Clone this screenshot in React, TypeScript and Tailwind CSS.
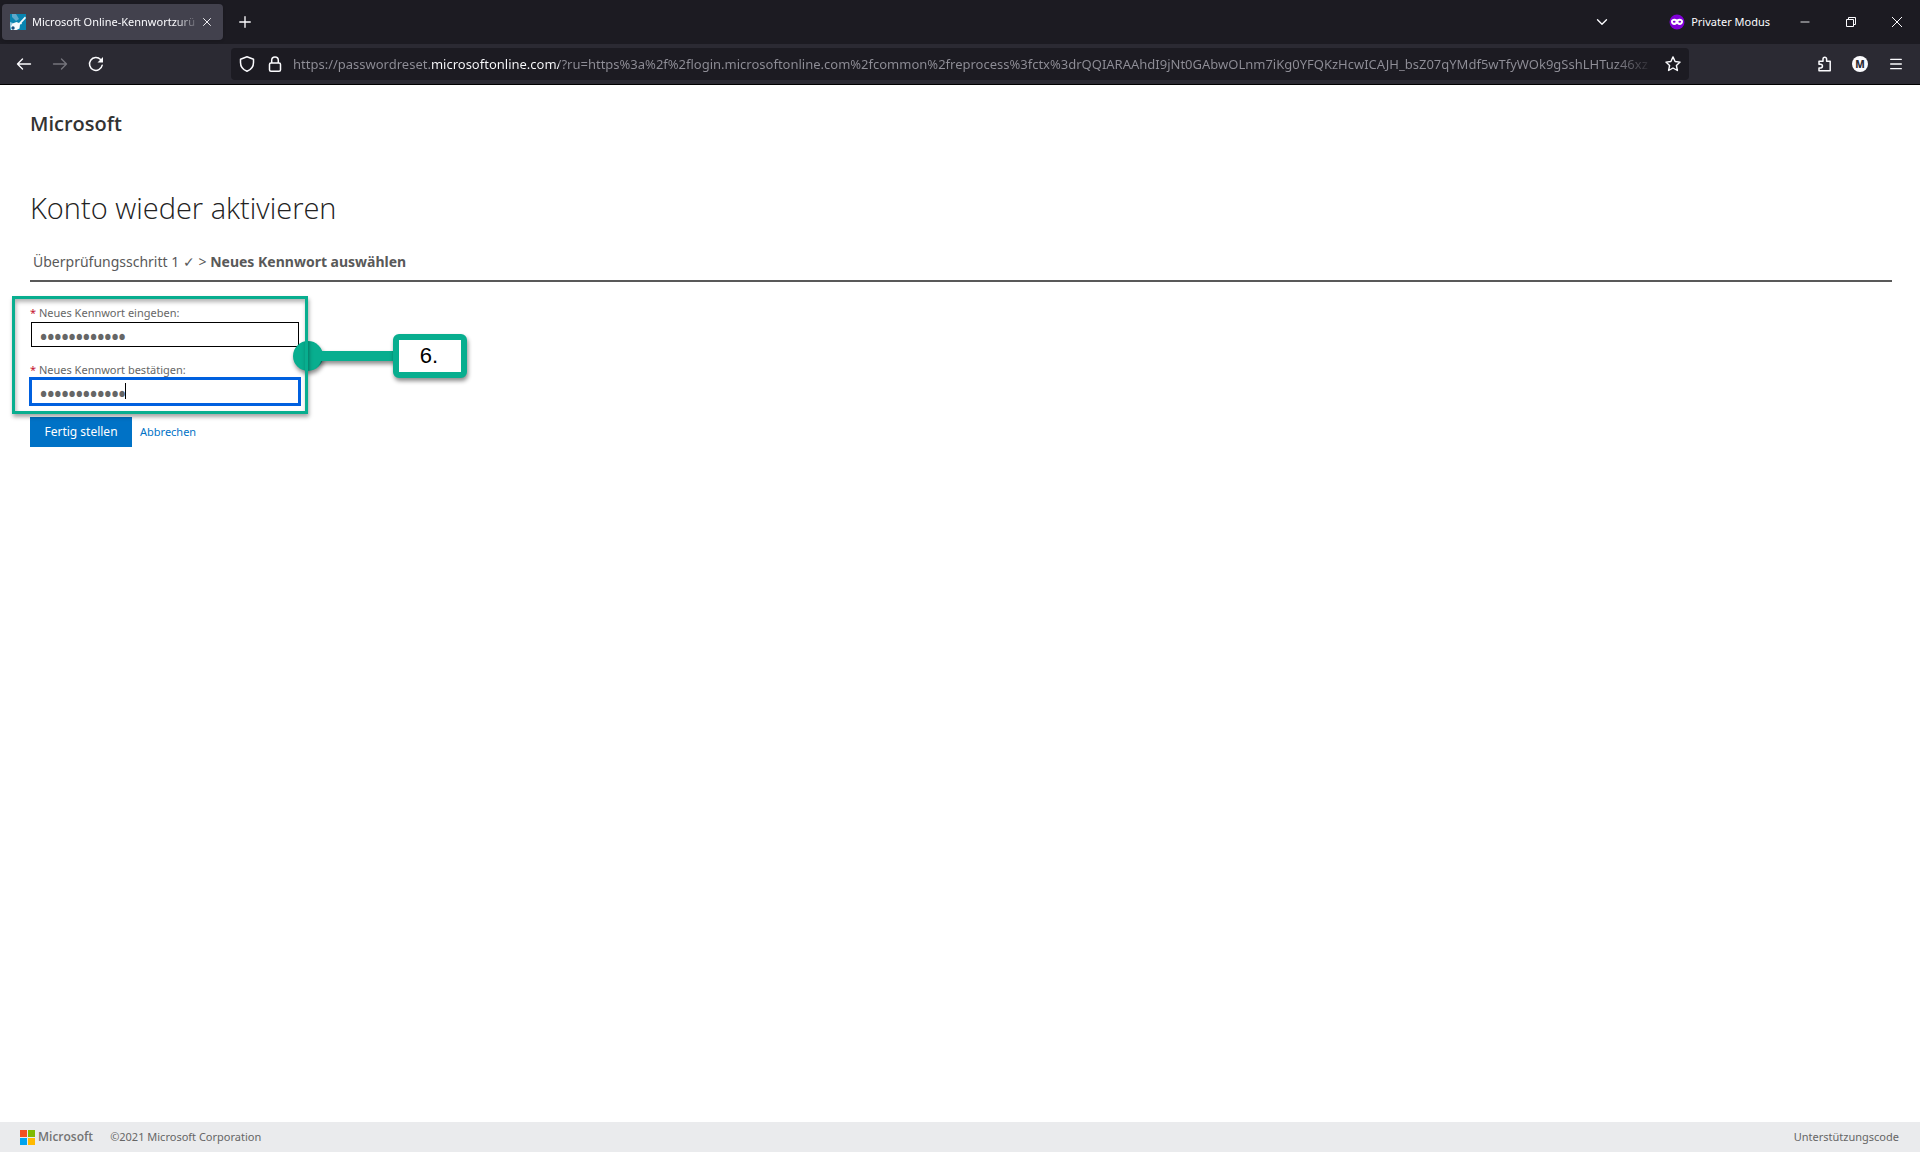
import React from "react";
import { Menu, Minus, Plus, X, ChevronDown } from "lucide-react";

const PAGE_ADDRESS = [
  "https://passwordreset.microsoftonline.com/",
  "?ru=https%3a%2f%2flogin.microsoftonline.com%2fcommon%2freprocess%3fctx%3d",
  "rQQIARAAhdI9jNt0GAbwOLnm7iKg0YFQKzHcwICAJH_bsZ07qYMdf5wTfyWOk9gSshLHTuz46xz",
]
  .join("")
  .replace(/CAJH_.*$/, "CAJH_bsZ07qYMdf5wTfyWOk9gSshLHTuz46xz");

function KeyFavicon() {
  return (
    <svg viewBox="0 0 16 16" className="size-4 shrink-0" aria-hidden="true">
      <rect width="16" height="16" fill="#0884b0" />
      <path d="M2 0h4l3 5-3 2-4-4z" fill="#5fa9cb" />
      <path d="M0 8l3 1-1 3-2 1z" fill="#8cc6dd" />
      <path d="M15 2.500l1 1.500-4.500 5 .5 1-2 .5-.5 4-3 1.500H1l-.5-3 2-3.500 4-1.500 2.500 1z" fill="#f4fafc" />
      <circle cx="3" cy="14" r="1.700" fill="#16507e" />
    </svg>
  );
}

function TabBar() {
  return (
    <div className="flex h-11 items-center bg-[#1c1b22] pr-4 text-[11px] text-[#fbfbfe]">
      <div className="ml-0.5 flex h-9 w-[221px] items-center rounded bg-[#42414d] pr-2 pl-2 shadow">
        <KeyFavicon />
        <span className="ml-1.5 min-w-0 flex-1 overflow-hidden pt-px whitespace-nowrap [mask-image:linear-gradient(to_right,black_85%,transparent)]">
          Microsoft Online-Kennwortzurü
        </span>
        <button aria-label="Tab schließen" className="mr-px">
          <X size={14} strokeWidth={1.6} />
        </button>
      </div>
      <button aria-label="Neuer Tab" className="ml-[13px]">
        <Plus size={18} strokeWidth={1.8} />
      </button>
      <button aria-label="Alle Tabs auflisten" className="ml-auto">
        <ChevronDown size={18} strokeWidth={1.8} />
      </button>
      <div className="ml-[58px] flex items-center gap-1.5">
        <svg viewBox="0 0 16 16" className="size-4" aria-hidden="true">
          <circle cx="8" cy="8" r="7.500" fill="#8000d7" />
          <path
            d="M8 5.600C6.300 4.300 2 4.400 2 7.600s3.600 4.600 6 2.200c2.400 2.400 6 1 6-2.200S9.700 4.300 8 5.600z"
            fill="#fff"
          />
          <ellipse cx="5.200" cy="7.800" rx="1.400" ry="1" fill="#8000d7" />
          <ellipse cx="10.800" cy="7.800" rx="1.400" ry="1" fill="#8000d7" />
        </svg>
        <span className="pt-px">Privater Modus</span>
      </div>
      <button aria-label="Minimieren" className="ml-7">
        <Minus size={14} strokeWidth={1.5} />
      </button>
      <button aria-label="Verkleinern" className="ml-8">
        <svg viewBox="0 0 14 14" className="size-3.5" fill="none" stroke="currentColor" aria-hidden="true">
          <path d="M2.500 4.500h7v7h-7zM4.500 4.500v-2h7v7h-2" />
        </svg>
      </button>
      <button aria-label="Schließen" className="ml-8">
        <svg viewBox="0 0 14 14" className="size-3.5" fill="none" stroke="currentColor" aria-hidden="true">
          <path d="M2 2l10 10M12 2l-10 10" />
        </svg>
      </button>
    </div>
  );
}

function Toolbar() {
  return (
    <div className="flex h-[41px] items-center border-b border-black bg-[#2b2a33] pr-4 pl-4 text-[#fbfbfe]">
      <button aria-label="Zurück">
        <svg viewBox="0 0 16 16" className="size-4" fill="none" stroke="currentColor" strokeWidth="1.400" strokeLinecap="round" strokeLinejoin="round" aria-hidden="true">
          <path d="M14.500 8H1.500M6.500 3l-5 5 5 5" />
        </svg>
      </button>
      <button aria-label="Vor" className="ml-5 text-[#75747c]">
        <svg viewBox="0 0 16 16" className="size-4" fill="none" stroke="currentColor" strokeWidth="1.400" strokeLinecap="round" strokeLinejoin="round" aria-hidden="true">
          <path d="M1.500 8h13M9.500 3l5 5-5 5" />
        </svg>
      </button>
      <button aria-label="Neu laden" className="ml-5">
        <svg viewBox="0 0 16 16" className="size-4" fill="none" stroke="currentColor" strokeWidth="1.500" strokeLinecap="round" aria-hidden="true">
          <path d="M14.200 9.200A6.400 6.400 0 1 1 12.600 3.600" />
          <path d="M15 1v5.500H9.500z" fill="currentColor" stroke="none" />
        </svg>
      </button>
      <div className="ml-[127px] flex h-8 w-[1458px] shrink items-center rounded bg-[#1c1b22] px-2">
        <svg viewBox="0 0 16 16" className="size-4 shrink-0" fill="none" stroke="currentColor" strokeWidth="1.500" strokeLinejoin="round" aria-hidden="true">
          <path d="M8 .8l6.500 2.400v3.300c0 4-2.700 7.300-6.500 8.700C4.200 13.800 1.500 10.500 1.500 6.500V3.200z" />
        </svg>
        <svg viewBox="0 0 16 16" className="ml-3 size-4 shrink-0" fill="none" stroke="currentColor" strokeWidth="1.500" aria-hidden="true">
          <rect x="2.500" y="7" width="11" height="8.200" rx="1.500" />
          <path d="M4.700 7V4.200a3.300 3.300 0 0 1 6.600 0V7" />
        </svg>
        <input
          aria-label="Adresse"
          readOnly
          value={PAGE_ADDRESS}
          className="mx-2.5 min-w-0 flex-1 bg-[linear-gradient(to_right,#8f8e97_137px,#fbfbfe_137px,#fbfbfe_266px,#8f8e97_266px,#8f8e97_97%,transparent)] bg-clip-text pt-0.5 text-[13px] text-transparent outline-none"
        />
        <button aria-label="Lesezeichen" className="shrink-0">
          <svg viewBox="0 0 16 16" className="size-4" fill="none" stroke="currentColor" strokeWidth="1.400" strokeLinejoin="round" aria-hidden="true">
            <path d="M8 .9l2.100 4.600 5 .6-3.700 3.400 1 5L8 12l-4.400 2.500 1-5L.9 6.100l5-.6z" />
          </svg>
        </button>
      </div>
      <button aria-label="Erweiterungen" className="ml-auto">
        <svg viewBox="0 0 16 16" className="size-4" fill="none" stroke="currentColor" strokeWidth="1.500" strokeLinejoin="round" aria-hidden="true">
          <path d="M3 8.200V5.200h4V3a1.800 1.800 0 0 1 3.600 0v2.200h3.600v9.500H3v-2.800h1.600a1.850 1.850 0 0 0 0-3.700z" />
        </svg>
      </button>
      <button
        aria-label="Konto"
        className="ml-5 flex size-4 items-center justify-center rounded-full bg-[#fbfbfe] text-[10px] font-extrabold text-[#2b2a33]"
      >
        M
      </button>
      <button aria-label="Menü" className="ml-5">
        <Menu size={16} strokeWidth={2} />
      </button>
    </div>
  );
}

function Callout() {
  return (
    <div className="pointer-events-none absolute -top-2.5 -left-[18px] h-[118px] w-[456px]">
      <div className="absolute top-[45px] left-[281px] size-[30px] rounded-full bg-[#08ae8f] shadow-[1px_3px_4px_rgba(0,0,0,0.45)]" />
      <div className="absolute top-[55px] left-[300px] h-2.5 w-[85px] bg-[#08ae8f] shadow-[1px_3px_4px_rgba(0,0,0,0.45)]" />
      <div className="absolute top-[46px] left-[282px] size-7 rounded-full bg-[#08ae8f]" />
      <div className="absolute top-0 left-0 h-[118px] w-[296px] border-[3px] border-[#08ae8f] shadow-[1px_3px_4px_rgba(0,0,0,0.35),inset_1px_3px_4px_rgba(0,0,0,0.3)]" />
      <div className="absolute top-[38px] left-[381px] flex h-11 w-[74px] items-center justify-center rounded-md border-[6px] border-[#08ae8f] bg-white pr-0.5 pb-0.5 font-['Liberation_Sans',sans-serif] text-[22px] text-black shadow-[1px_3px_4px_rgba(0,0,0,0.45)]">
        6.
      </div>
    </div>
  );
}

function PasswordForm() {
  return (
    <form className="relative mt-6 w-fit text-[11px]" onSubmit={(e) => e.preventDefault()}>
      <label htmlFor="new-password" className="block h-4 leading-3.5">
        <span className="text-[#c4122e]">*</span> Neues Kennwort eingeben:
      </label>
      <input
        id="new-password"
        type="password"
        defaultValue="abcdefghijkl"
        className="ml-px block h-[25px] w-[268px] border border-black bg-white px-2 pt-1 font-['Open_Sans',sans-serif] text-[19px] leading-4 font-bold text-[#666]"
      />
      <label htmlFor="confirm-password" className="mt-4 block h-4 leading-3.5">
        <span className="text-[#c4122e]">*</span> Neues Kennwort bestätigen:
      </label>
      <div className="relative ml-px w-fit">
        <input
          id="confirm-password"
          type="password"
          defaultValue="abcdefghijkl"
          className="block h-[25px] w-[268px] bg-white px-[9px] pt-1 font-['Open_Sans',sans-serif] text-[19px] leading-4 font-bold text-[#666] outline-3 -outline-offset-1 outline-[#0060df]"
        />
        <span className="absolute top-1 left-[94px] h-4 w-px bg-black" />
      </div>
      <div className="mt-[13px] flex items-center gap-2">
        <button className="h-[30px] w-[102px] bg-[#0072c6] text-xs text-white">Fertig stellen</button>
        <a href="#" className="text-[#0072c6]">
          Abbrechen
        </a>
      </div>
      <Callout />
    </form>
  );
}

export default function App() {
  return (
    <div className="flex min-h-screen flex-col bg-white font-['Noto_Sans',sans-serif] text-[#666]">
      <TabBar />
      <Toolbar />
      <main className="flex-1 pr-7 pl-[30px] pt-[23px]">
        <div className="font-['Open_Sans',sans-serif] text-xl leading-8 font-semibold text-[#333]">Microsoft</div>
        <h1 className="mt-12 font-['Open_Sans',sans-serif] text-[29px] leading-10 font-light text-[#222]">
          Konto wieder aktivieren
        </h1>
        <p className="mt-6 border-b-2 border-[#595959] pb-2 pl-[3px] text-sm leading-5 text-[#595959]">
          Überprüfungsschritt 1 ✓ &gt; <strong className="font-bold">Neues Kennwort auswählen</strong>
        </p>
        <PasswordForm />
      </main>
      <footer className="flex h-[30px] items-center bg-[#eaebed] pr-[21px] pl-5 text-[11px]">
        <svg viewBox="0 0 15 15" className="size-[15px]" aria-hidden="true">
          <path d="M0 0h7v7H0z" fill="#f25022" />
          <path d="M8 0h7v7H8z" fill="#7fba00" />
          <path d="M0 8h7v7H0z" fill="#00a4ef" />
          <path d="M8 8h7v7H8z" fill="#ffb900" />
        </svg>
        <span className="ml-[3px] font-['Open_Sans',sans-serif] text-xs font-semibold text-[#737373]">Microsoft</span>
        <span className="ml-[17px] pt-px">©2021 Microsoft Corporation</span>
        <a href="#" className="ml-auto pt-px">
          Unterstützungscode
        </a>
      </footer>
    </div>
  );
}
